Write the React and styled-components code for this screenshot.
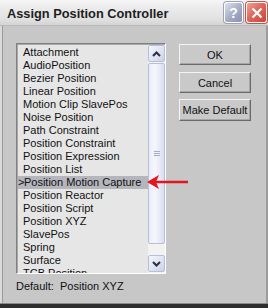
import React from "react";
import styled, { createGlobalStyle } from "styled-components";

const Global = createGlobalStyle`
  html, body { margin: 0; padding: 0; background: #2e2e2e; }
  body { font-family: "Liberation Sans", Arial, sans-serif; }
  * { box-sizing: border-box; }
`;

const Win = styled.div`
  position: relative;
  width: 268px;
  height: 304px;
  background: #c7c7c7;
  display: flex;
  flex-direction: column;
  border-bottom: 1px solid #8a8a8a;
`;

const TitleBar = styled.div`
  height: 26px;
  flex: none;
  display: flex;
  align-items: center;
  padding: 0 1px 0 7px;
  background: linear-gradient(#f6f6f6 0%, #ebebeb 30%, #e2e2e2 75%, #d4d4d4 100%);
  border-bottom: 1px solid #b8b8b8;
`;

const Title = styled.div`
  flex: 1;
  font-family: "Liberation Sans", Arial, sans-serif;
  font-weight: bold;
  font-size: 12.8px;
  color: #1e1e1e;
  padding-top: 1px;
`;

const CapBtn = styled.div`
  width: ${(p) => p.$w}px;
  height: 21px;
  margin-left: ${(p) => p.$ml}px;
  border: 1px solid #fbfbfb;
  border-radius: 3px;
  display: flex;
  align-items: center;
  justify-content: center;
  color: #fff;
  font-weight: bold;
  font-size: 14px;
  background: ${(p) =>
    p.$red
      ? "linear-gradient(135deg, #f4a095 0%, #e0685a 45%, #c8453a 100%)"
      : "linear-gradient(135deg, #dde0ee 0%, #a9afc8 50%, #8a90ae 100%)"};
  box-shadow: 0 0 0 1px ${(p) => (p.$red ? "#b8584e" : "#9ca2b8")};
`;

const Body = styled.div`
  flex: 1;
  display: flex;
  padding: 17px 0 0 16px;
  border-left: 2px solid #dadada;
  border-right: 2px solid #9c9c9c;
  box-shadow: inset 1px 0 0 #9a9a9a;
`;

const LeftCol = styled.div`
  width: 150px;
  margin-left: -2px;
  display: flex;
  flex-direction: column;
`;

const ListBox = styled.div`
  width: 150px;
  height: 231px;
  display: flex;
  background: #e6e6e6;
  border-top: 1px solid #808080;
  border-left: 1px solid #808080;
  border-right: 1px solid #ffffff;
  border-bottom: 1px solid #ffffff;
  box-shadow: inset 1px 1px 0 #a8a8a8;
  padding: 1px 0 0 1px;
  overflow: hidden;
`;

const Items = styled.div`
  flex: 1;
  padding-top: 1px;
  overflow: hidden;
`;

const Item = styled.div`
  height: 13px;
  line-height: 13px;
  font-size: 11px;
  color: #111;
  white-space: nowrap;
  padding-left: ${(p) => (p.$sel ? 0 : 5)}px;
  background: ${(p) => (p.$sel ? "#b4b6bc" : "transparent")};
`;

const Caret = styled.span`
  letter-spacing: -2.5px;
  margin-right: 2px;
`;

const Scroll = styled.div`
  width: 17px;
  flex: none;
  display: flex;
  flex-direction: column;
  background: #f2f2f0;
  padding-bottom: 1px;
`;

const ScrollBtn = styled.div`
  height: 17px;
  flex: none;
  border: 1px solid #b7bfd6;
  border-radius: 2px;
  background: linear-gradient(135deg, #f4f6fc 0%, #dde2f2 60%, #c9d0e6 100%);
  display: flex;
  align-items: center;
  justify-content: center;
`;

const Thumb = styled.div`
  margin: 1px 0 11px;
  height: 181px;
  flex: none;
  border: 1px solid #b7bfd6;
  border-radius: 2px;
  background: linear-gradient(90deg, #e9ecf8 0%, #f6f7fc 40%, #d9def0 100%);
  display: flex;
  align-items: center;
  justify-content: center;
`;

const Grip = styled.div`
  width: 6px;
  height: 7px;
  background: repeating-linear-gradient(#eef0f8 0 1px, #a4acc6 1px 2px);
`;

const DefaultLabel = styled.div`
  margin-top: 6px;
  font-size: 11px;
  line-height: 13px;
  color: #111;
  white-space: pre;
`;

const RightCol = styled.div`
  margin-left: 13px;
  margin-top: 1px;
  display: flex;
  flex-direction: column;
`;

const Button = styled.div`
  width: 72px;
  height: ${(p) => p.$h || 21}px;
  margin-top: ${(p) => p.$mt || 0}px;
  background: #c9c9c9;
  border-top: 1px solid #f4f4f4;
  border-left: 1px solid #f4f4f4;
  border-right: 1px solid #6a6a6a;
  border-bottom: 1px solid #6a6a6a;
  box-shadow: inset -1px -1px 0 #a6a6a6;
  display: flex;
  align-items: center;
  justify-content: center;
  font-size: 11px;
  color: #111;
`;

const Arrow = styled.svg`
  position: absolute;
  left: 146px;
  top: 173px;
`;

const items = [
  "Attachment",
  "AudioPosition",
  "Bezier Position",
  "Linear Position",
  "Motion Clip SlavePos",
  "Noise Position",
  "Path Constraint",
  "Position Constraint",
  "Position Expression",
  "Position List",
  "Position Motion Capture",
  "Position Reactor",
  "Position Script",
  "Position XYZ",
  "SlavePos",
  "Spring",
  "Surface",
  "TCB Position",
];

const Chevron = ({ up }) => (
  <svg width="9" height="6" viewBox="0 0 9 6">
    <path
      d={up ? "M1 5 L4.5 1.5 L8 5" : "M1 1 L4.5 4.5 L8 1"}
      fill="none"
      stroke="#2a3040"
      strokeWidth="2"
    />
  </svg>
);

export default function App() {
  return (
    <>
      <Global />
      <Win>
        <TitleBar>
          <Title>Assign Position Controller</Title>
          <CapBtn $w={19} $ml={0}>?</CapBtn>
          <CapBtn $w={21} $ml={3} $red>
            <svg width="12" height="12" viewBox="0 0 12 12">
              <path d="M1.5 1.5 L10.5 10.5 M10.5 1.5 L1.5 10.5" stroke="#fff" strokeWidth="2.2" />
            </svg>
          </CapBtn>
        </TitleBar>
        <Body>
          <LeftCol>
            <ListBox>
              <Items>
                {items.map((t) => (
                  <Item key={t} $sel={t === "Position Motion Capture"}>
                    {t === "Position Motion Capture" && <Caret>&gt;</Caret>}
                    {t}
                  </Item>
                ))}
              </Items>
              <Scroll>
                <ScrollBtn>
                  <Chevron up />
                </ScrollBtn>
                <Thumb>
                  <Grip />
                </Thumb>
                <ScrollBtn>
                  <Chevron />
                </ScrollBtn>
              </Scroll>
            </ListBox>
            <DefaultLabel>{"Default:  Position XYZ"}</DefaultLabel>
          </LeftCol>
          <RightCol>
            <Button>OK</Button>
            <Button $mt={7}>Cancel</Button>
            <Button $mt={6} $h={22}>Make Default</Button>
          </RightCol>
        </Body>
        <Arrow width="44" height="18" viewBox="0 0 44 18">
          <line x1="9" y1="9" x2="42" y2="9" stroke="#e0171c" strokeWidth="2.5" />
          <path d="M1 9 L13 2 L10 9 L13 16 Z" fill="#e0171c" />
        </Arrow>
      </Win>
    </>
  );
}
